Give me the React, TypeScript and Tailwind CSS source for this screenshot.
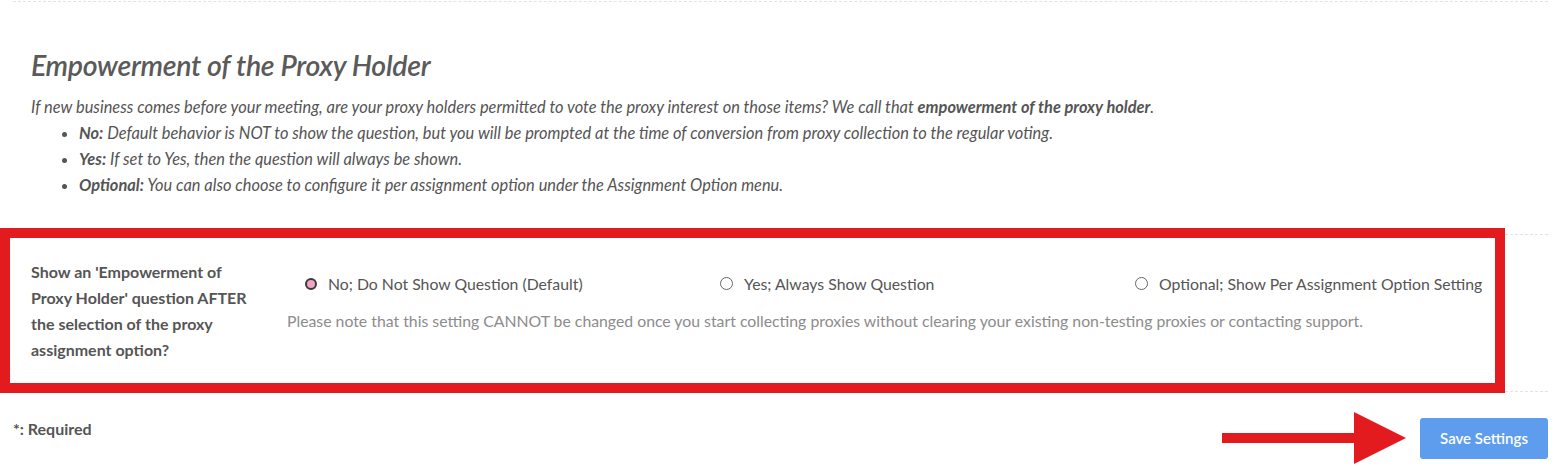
import React from "react";

const font = { fontFamily: "Lato, 'Open Sans', sans-serif" };

function Radio({ checked, label }: { checked?: boolean; label: string }) {
  return (
    <label className="flex items-center gap-[11px] text-[15.8px] text-[#555]">
      <span
        className={
          checked
            ? "w-[12px] h-[12px] rounded-full border-2 border-[#3a3a3a] bg-[#f3a3c4] inline-block"
            : "w-[13px] h-[13px] rounded-full border border-[#666] bg-white inline-block"
        }
      />
      <span>{label}</span>
    </label>
  );
}

export default function App() {
  return (
    <div className="w-[1555px] h-[469px] bg-white text-[#555] overflow-hidden" style={font}>
      <div className="ml-[13px] mr-[7px] pt-[1px]">
        <div className="border-t border-dashed border-[#e3e3e3]" />
        <div className="pl-[18px] pt-[46px]">
          <h1 className="text-[28.5px] leading-[34px] italic font-semibold text-[#5a5a5a] tracking-[-0.3px]">
            Empowerment of the Proxy Holder
          </h1>
          <p className="mt-[12px] text-[16.4px] leading-[26px] italic">
            If new business comes before your meeting, are your proxy holders permitted to vote the proxy interest on those items? We call that{" "}
            <b className="font-bold">empowerment of the proxy holder</b>.
          </p>
          <ul className="list-disc pl-[48px] text-[16.4px] leading-[26px] italic">
            <li>
              <b>No:</b> Default behavior is NOT to show the question, but you will be prompted at the time of conversion from proxy collection to the regular voting.
            </li>
            <li>
              <b>Yes:</b> If set to Yes, then the question will always be shown.
            </li>
            <li>
              <b>Optional:</b> You can also choose to configure it per assignment option under the Assignment Option menu.
            </li>
          </ul>
        </div>

        <div className="relative mt-[36px] border-y border-dashed border-[#e3e3e3] h-[158px] flex pt-[24px]">
          <div className="w-[256px] pl-[18px] pr-[8px] text-[16px] leading-[26px] font-bold text-[#555]">
            Show an 'Empowerment of Proxy Holder' question AFTER the selection of the proxy assignment option?
          </div>
          <div className="flex-1 pl-[18px] pt-[13px]">
            <div className="grid grid-cols-3 w-[1245px]">
              <div className="pl-[18px]">
                <Radio checked label="No; Do Not Show Question (Default)" />
              </div>
              <div className="pl-[18px]">
                <Radio label="Yes; Always Show Question" />
              </div>
              <div className="pl-[18px]">
                <Radio label="Optional; Show Per Assignment Option Setting" />
              </div>
            </div>
            <p className="mt-[14px] text-[15.8px] leading-[22px] text-[#8c8c8c]">
              Please note that this setting CANNOT be changed once you start collecting proxies without clearing your existing non-testing proxies or contacting support.
            </p>
          </div>
          <div className="absolute left-[-13px] top-[-7px] w-[1505px] h-[165px] border-[10px] border-[#e31b1e] pointer-events-none" />
        </div>

        <div className="flex justify-between items-start mt-[20px]">
          <div className="mt-[5px] text-[16px] leading-[24px] font-bold text-[#555]">*: Required</div>
          <div className="flex items-center">
            <svg width="185" height="52" viewBox="0 0 185 52" className="mr-[13px]">
              <rect x="0" y="21" width="134" height="10" fill="#e31b1e" />
              <polygon points="132,0 184,26 132,52" fill="#e31b1e" />
            </svg>
            <button className="w-[128px] h-[41px] rounded-[3px] bg-[#5e9ded] text-white text-[15px] font-semibold">
              Save Settings
            </button>
          </div>
        </div>
      </div>
    </div>
  );
}
